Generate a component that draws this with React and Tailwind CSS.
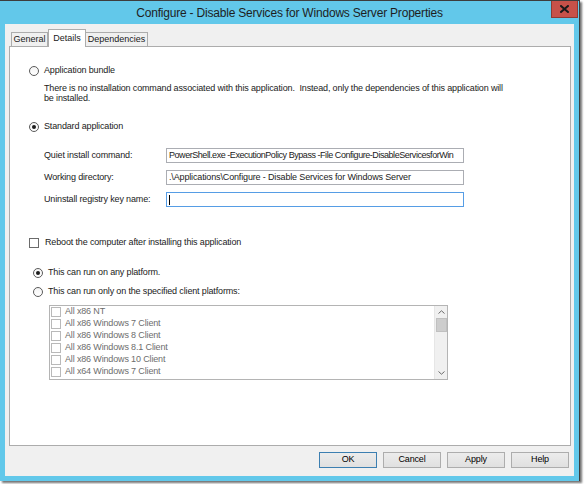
import React from "react";

function Radio({ checked }) {
  return (
    <span className="relative w-[10px] h-[10px] rounded-full border border-[#5a5a5a] bg-gradient-to-b from-[#f4f4f4] to-[#ffffff] shrink-0 flex items-center justify-center">
      {checked && <span className="w-[4px] h-[4px] rounded-full bg-[#1c1c1c]" />}
    </span>
  );
}

function Check({ disabled }) {
  return (
    <span
      className={
        "w-[10px] h-[10px] border bg-white shrink-0 " +
        (disabled ? "border-[#b9b9b9]" : "border-[#6b6b6b]")
      }
    />
  );
}

function Btn({ label, primary }) {
  return (
    <div
      className={
        "w-[58px] h-[16px] flex items-center justify-center bg-gradient-to-b from-[#ececec] to-[#e0e0e0] border text-black " +
        (primary ? "border-[#3c7fb1]" : "border-[#adadad]")
      }
    >
      {label}
    </div>
  );
}

const platforms = [
  "All x86 NT",
  "All x86 Windows 7 Client",
  "All x86 Windows 8 Client",
  "All x86 Windows 8.1 Client",
  "All x86 Windows 10 Client",
  "All x64 Windows 7 Client",
];

export default function App() {
  return (
    <div className="w-[585px] h-[484px] bg-white overflow-hidden font-['Liberation_Sans',Arial,sans-serif] text-[9px] tracking-[-0.15px] text-[#1a1a1a]">
      <div className="w-[580px] h-[481px] bg-[#62c8ea] border-t border-r border-[#3d3d3d] shadow-[2px_2px_2px_rgba(0,0,0,0.55)] flex flex-col">
        {/* Title bar */}
        <div className="relative h-[23px] flex items-center justify-center shrink-0">
          <span className="text-[12px] tracking-[-0.2px] text-[#1e1e1e] mt-[1px]">
            Configure - Disable Services for Windows Server Properties
          </span>
          <div className="absolute right-[1px] top-0 w-[27px] h-[17px] bg-[#c75149] border border-[#8e3a34] border-t-0 flex items-center justify-center">
            <svg width="9" height="8" viewBox="0 0 9 8">
              <path d="M1 1 L8 7 M8 1 L1 7" stroke="#1a1a1a" strokeWidth="2" strokeLinecap="square" />
            </svg>
          </div>
        </div>

        {/* Client area */}
        <div className="ml-[5px] w-[569px] h-[452px] bg-[#f0f0f0] flex flex-col shrink-0">
          {/* Tabs */}
          <div className="h-[22px] pl-[6px] flex items-end relative z-10 tracking-[0px]">
            <div className="w-[37px] h-[14px] border border-b-0 border-[#acacac] bg-[#f0f0f0] flex items-center justify-center">
              General
            </div>
            <div className="w-[38px] h-[18px] -mb-px border border-b-0 border-[#acacac] bg-white flex items-start justify-center pt-[2px]">
              Details
            </div>
            <div className="w-[62px] h-[14px] border border-b-0 border-l-0 border-[#acacac] bg-[#f0f0f0] flex items-center justify-center">
              Dependencies
            </div>
          </div>

          {/* Panel */}
          <div className="ml-[4px] w-[562px] h-[400px] bg-white border border-[#acacac] flex flex-col">
            <div className="mt-[18px] h-[12px] pl-[19px] flex items-center gap-[5px]">
              <Radio />
              <span>Application bundle</span>
            </div>
            <div className="mt-[6px] pl-[34px] leading-[10px] whitespace-pre">
              {"There is no installation command associated with this application.  Instead, only the dependencies of this application will\nbe installed."}
            </div>
            <div className="mt-[18px] h-[12px] pl-[19px] flex items-center gap-[5px]">
              <Radio checked />
              <span>Standard application</span>
            </div>

            <div className="mt-[15px] flex flex-col gap-[7px] pl-[34px]">
              <div className="flex items-center h-[15px]">
                <span className="w-[122px]">Quiet install command:</span>
                <div className="w-[298px] h-[15px] border border-[#abadb3] bg-white flex items-center pl-[2px] overflow-hidden whitespace-nowrap tracking-[-0.45px]">
                  PowerShell.exe -ExecutionPolicy Bypass -File Configure-DisableServicesforWin
                </div>
              </div>
              <div className="flex items-center h-[15px]">
                <span className="w-[122px]">Working directory:</span>
                <div className="w-[298px] h-[15px] border border-[#abadb3] bg-white flex items-center pl-[2px] overflow-hidden whitespace-nowrap">
                  .\Applications\Configure - Disable Services for Windows Server
                </div>
              </div>
              <div className="flex items-center h-[15px]">
                <span className="w-[122px]">Uninstall registry key name:</span>
                <div className="w-[298px] h-[15px] border border-[#569de5] bg-white flex items-center pl-[2px]">
                  <span className="w-px h-[10px] bg-black" />
                </div>
              </div>
            </div>

            <div className="mt-[30px] h-[12px] pl-[19px] flex items-center gap-[6px]">
              <Check />
              <span>Reboot the computer after installing this application</span>
            </div>

            <div className="mt-[18px] h-[12px] pl-[23px] flex items-center gap-[5px]">
              <Radio checked />
              <span>This can run on any platform.</span>
            </div>
            <div className="mt-[7px] h-[12px] pl-[23px] flex items-center gap-[5px]">
              <Radio />
              <span>This can run only on the specified client platforms:</span>
            </div>

            <div className="mt-[7px] ml-[39px] w-[399px] h-[75px] border border-[#b4b4b4] bg-white flex">
              <div className="flex-1 flex flex-col pl-[1px] text-[#6d6d6d]">
                {platforms.map((p) => (
                  <div key={p} className="h-[12px] flex items-center gap-[4px]">
                    <Check disabled />
                    <span>{p}</span>
                  </div>
                ))}
              </div>
              <div className="w-[13px] h-full bg-[#f0f0f0] border-l border-[#e6e6e6] flex flex-col items-center">
                <div className="h-[12px] w-full flex items-center justify-center">
                  <svg width="7" height="4" viewBox="0 0 7 4">
                    <path d="M0.5 3.5 L3.5 0.8 L6.5 3.5" stroke="#6a6a6a" strokeWidth="1" fill="none" />
                  </svg>
                </div>
                <div className="w-[11px] h-[14px] bg-[#cdcdcd] border border-[#c0c0c0]" />
                <div className="flex-1" />
                <div className="h-[12px] w-full flex items-center justify-center">
                  <svg width="7" height="4" viewBox="0 0 7 4">
                    <path d="M0.5 0.5 L3.5 3.2 L6.5 0.5" stroke="#6a6a6a" strokeWidth="1" fill="none" />
                  </svg>
                </div>
              </div>
            </div>
          </div>

          {/* Buttons */}
          <div className="mt-[6px] pr-[5px] flex justify-end gap-[6px]">
            <Btn label="OK" primary />
            <Btn label="Cancel" />
            <Btn label="Apply" />
            <Btn label="Help" />
          </div>
        </div>
      </div>
    </div>
  );
}
